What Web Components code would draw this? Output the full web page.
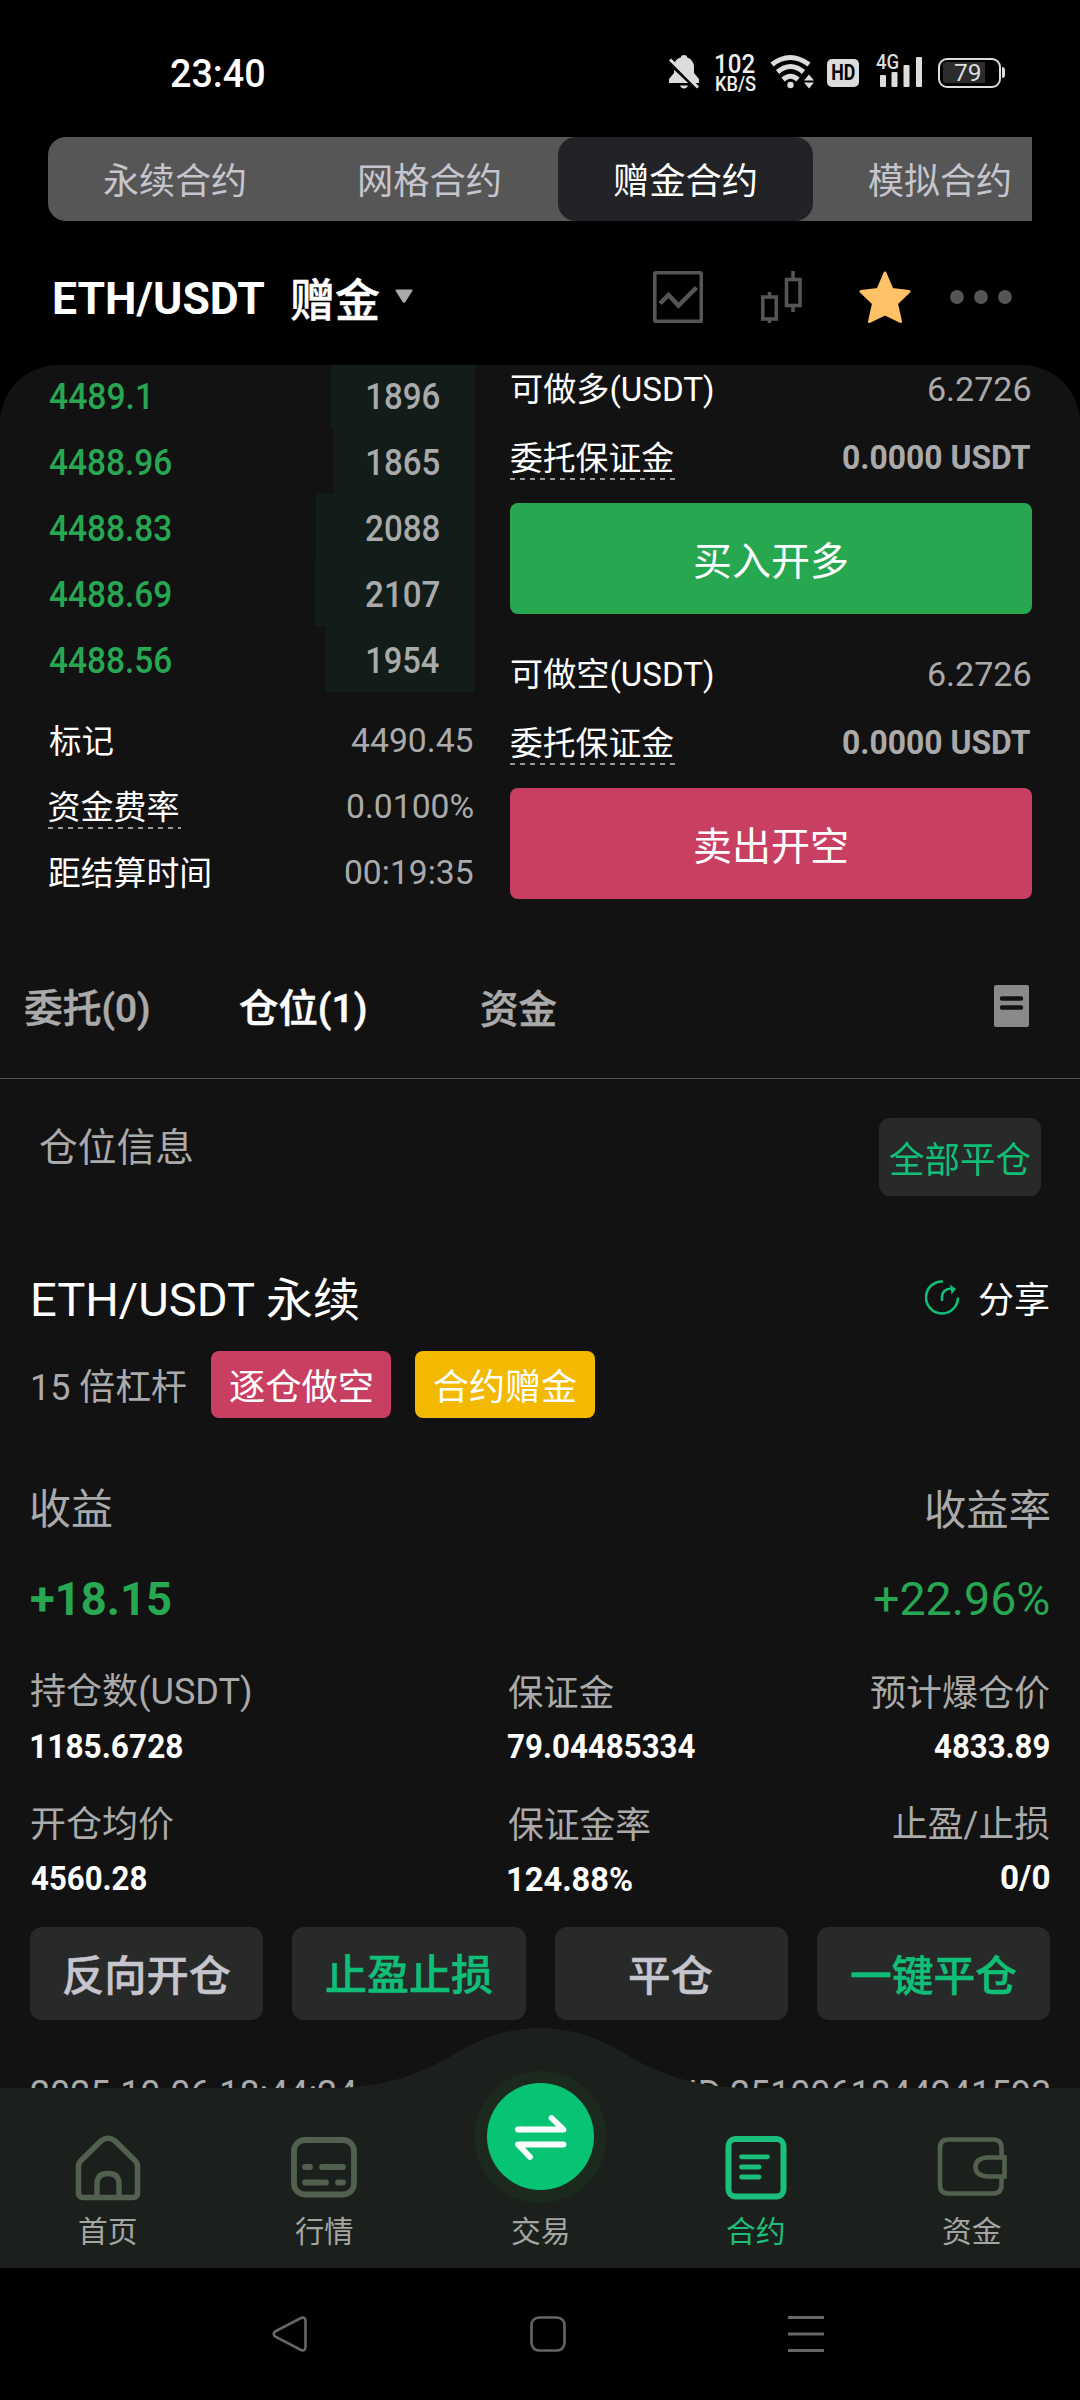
<!DOCTYPE html>
<html lang="zh-CN">
<head>
<meta charset="utf-8">
<title>ETH/USDT 赠金合约</title>
<style>
html,body{margin:0;padding:0;background:#000}
body{width:1080px;height:2400px;overflow:hidden;display:flex;flex-direction:column;color:#fff;
font-family:Roboto,"Noto Sans CJK SC",sans-serif}
</style>
</head>
<body>
<status-bar></status-bar>
<segment-tabs></segment-tabs>
<pair-header></pair-header>
<trade-panel>
  <order-book slot="book"></order-book>
  <trade-form slot="form"></trade-form>
  <view-tabs></view-tabs>
  <position-card></position-card>
</trade-panel>
<bottom-nav></bottom-nav>
<system-nav></system-nav>
<script>
/* Text whose box is exactly its ink: w = ink width, s = size, wt = weight, c = colour */
class InkText extends HTMLElement{
  connectedCallback(){
    if(this.shadowRoot) return;
    const r=this.attachShadow({mode:'open'});
    const s=+this.getAttribute('s'),wt=this.getAttribute('wt')||'400',w=+this.getAttribute('w');
    const c=this.getAttribute('c');
    const L=Math.ceil(s);
    const ctx=InkText.ctx;
    ctx.font=`${wt} ${s}px Roboto, "Noto Sans CJK SC", sans-serif`;
    const m=ctx.measureText(this.textContent);
    const ink=m.actualBoundingBoxRight+m.actualBoundingBoxLeft;
    const k=w?w/ink:1;
    const base=(L+Math.round(m.fontBoundingBoxAscent)-Math.round(m.fontBoundingBoxDescent))/2;
    const dy=-Math.round(base-m.actualBoundingBoxAscent);
    const h=Math.round(m.actualBoundingBoxAscent+m.actualBoundingBoxDescent);
    /* the CJK family has no medium cut, so a thin stroke gives its weight */
    const cjk=wt==='500'&&/[\u4e00-\u9fff]/.test(this.textContent);
    r.innerHTML=`<style>:host{display:block;flex:none;width:${w||ink}px;height:${h}px;${c?`color:${c};`:''}}
      div{width:max-content;white-space:pre;font-size:${s}px;font-weight:${wt};line-height:${L}px;${cjk?'-webkit-text-stroke:.5px currentColor;':''}
      transform-origin:0 0;transform:translateY(${dy}px) scaleX(${k}) translateX(${m.actualBoundingBoxLeft}px)}</style><div><slot></slot></div>`;
  }
}
InkText.ctx=document.createElement('canvas').getContext('2d');
customElements.define('ink-text',InkText);

const define=(name,css,html)=>{
  const t=document.createElement('template');
  t.innerHTML=`<style>:host{box-sizing:border-box}*{box-sizing:border-box}svg{display:block;flex:none}${css}</style>${html}`;
  customElements.define(name,class extends HTMLElement{
    constructor(){super();this.attachShadow({mode:'open'}).append(document.importNode(t.content,true));}
  });
};

define('dash-label',`
:host{display:block;flex:none}
.b{padding:6px 0;position:relative}
.b::after{content:"";position:absolute;left:-1px;right:-2px;bottom:0;height:2px;background:repeating-linear-gradient(90deg,#999 0 5px,transparent 5px 10px)}
`,`<div class="b"><slot></slot></div>`);

define('status-bar',`
:host{display:flex;height:137px;padding:50px 0 42px 171px;align-items:center}
.net{margin-left:14px;display:flex;flex-direction:column;gap:3px}
.hd{margin-left:13px;width:32px;height:28px;border-radius:5px;background:#dcdcdc;display:flex;align-items:center;justify-content:center}
.sig{margin-left:17px;position:relative}
.sig ink-text{position:absolute;left:0;top:5px}
.bat{margin-left:15px;width:63px;height:30px;border:2.5px solid #dcdcdc;border-radius:9px;display:flex;align-items:center;padding-left:3px}
.fill{width:42px;height:21px;background:#2c2c2c;border-radius:3px 0 0 3px;display:flex;align-items:center;padding-left:11px}
.cap{width:3px;height:11px;margin-left:1px;border-radius:0 3px 3px 0;background:#dcdcdc}
`,`<ink-text w="93" s="38" wt="500">23:40</ink-text>
<svg style="margin-left:405px" width="33" height="45" viewBox="0 0 33 45"><path d="M0 33v-4l5-6V16C5 11 9 8 12 7.5V7q0-2 3-2t3 2v.5c4 1 7 5 7 9V23l5 6v4zM11 35.500h8q-1 3-4 3t-4-3z" fill="#dcdcdc"/><path d="M-1 11 31 41" stroke="#000" stroke-width="4.500"/><path d="M1 9.500 29 37.500" stroke="#dcdcdc" stroke-width="3"/></svg>
<div class="net"><ink-text w="39" s="25" wt="500" c="#eee">102</ink-text><ink-text w="40" s="20" wt="500" c="#eee">KB/S</ink-text></div>
<svg style="margin-left:14px" width="44" height="45" viewBox="0 0 44 45"><g fill="none" stroke="#dcdcdc" stroke-width="5"><path d="M2 14.500q18-14 37 0"/><path d="M7.500 22q13-11 26 0"/><path d="M13 29.500q7.500-6.500 15 0"/></g><circle cx="20.500" cy="35" r="3.200" fill="#dcdcdc"/><path d="M39 23l6.500 8h-13z" stroke="#000" stroke-width="2.500"/><path d="M39 24.500l5 6H34zM39 38.500l5-6H34z" fill="#dcdcdc"/></svg>
<div class="hd"><ink-text w="23" s="22" wt="700" c="#000">HD</ink-text></div>
<div class="sig"><svg width="47" height="45" viewBox="0 0 47 45" fill="#dcdcdc"><rect x="4" y="25" width="6" height="12" rx="1"/><rect x="15.500" y="22" width="6" height="15" rx="1"/><rect x="27.500" y="15" width="6" height="22" rx="1"/><rect x="40" y="7" width="6" height="30" rx="1"/></svg><ink-text w="22" s="21" wt="500" c="#dcdcdc">4G</ink-text></div>
<div class="bat"><div class="fill"><ink-text w="26" s="24" wt="400" c="#dcdcdc">79</ink-text></div></div><div class="cap"></div>`);

define('segment-tabs',`
:host{display:flex;flex:none;height:84px;margin-left:48px;width:984px;border-radius:18px 0 0 18px;background:#565656;overflow:hidden}
div{flex:none;width:255px;height:84px;display:flex;align-items:center;justify-content:center;color:#c6c5cd;padding-top:2px;padding-right:2px}
.on{background:#222326;color:#fff;border-radius:18px}
`,`<div><ink-text w="141" s="36">永续合约</ink-text></div><div><ink-text w="140" s="36">网格合约</ink-text></div><div class="on"><ink-text w="142" s="36">赠金合约</ink-text></div><div><ink-text w="141" s="36">模拟合约</ink-text></div>`);

define('pair-header',`
:host{display:flex;flex:none;height:144px;padding:10px 0 0 54px;align-items:center}
svg{margin-bottom:2px}
`,`<ink-text style="margin-top:3px" w="210" s="45" wt="700">ETH/USDT</ink-text><ink-text style="margin-left:27px;margin-top:2px" w="88" s="45" wt="500">赠金</ink-text>
<svg style="margin-left:15px" width="20" height="16" viewBox="0 0 20 16"><path d="M2.500 1.500h15L10.500 12.500q-.5.500-1 0z" fill="#aaa" stroke="#aaa" stroke-width="2" stroke-linejoin="round"/></svg>
<svg style="margin-left:239px" width="50" height="52" viewBox="0 0 50 52" fill="none" stroke="#555"><rect x="1.800" y="1.800" width="46.500" height="48.500" rx="1" stroke-width="3.600"/><path d="M7 32.500 15.500 24 25.500 34.500 43.500 16.500" stroke-width="4.500"/></svg>
<svg style="margin-left:58px" width="41" height="52" viewBox="0 0 41 52" fill="none" stroke="#555" stroke-width="3.600"><rect x="1.800" y="26" width="13.500" height="22"/><path d="M8.500 21v5M8.500 48v4M32 0v8M32 35v6"/><rect x="25.500" y="8.500" width="13.500" height="26"/></svg>
<svg style="margin-left:57px" width="52" height="52" viewBox="0 0 52 52"><path d="M26 2 33 18.500 50 20.500 37.500 32.500 41.500 50.500 26 43 10.500 50.500 14.500 32.500 2 20.500 19 18.500z" fill="#ffc266" stroke="#ffc266" stroke-width="3" stroke-linejoin="round"/></svg>
<svg style="margin-left:39px" width="62" height="14" viewBox="0 0 62 14" fill="#555"><circle cx="7" cy="7" r="6.900"/><circle cx="31" cy="7" r="6.900"/><circle cx="55" cy="7" r="6.900"/></svg>`);

define('trade-panel',`
:host{display:block;height:1723px;flex:none;background:#121212;border-radius:58px 58px 0 0;overflow:hidden}
.top{display:flex;height:534px}
.l{width:474px;margin-right:36px}.r{width:522px}
`,`<div class="top"><div class="l"><slot name="book"></slot></div><div class="r"><slot name="form"></slot></div></div><slot></slot>`);

const book=[['4489.1',99,1896,72,143],['4488.96',122,1865,72,140],['4488.83',122,2088,73,158],['4488.69',122,2107,73,159],['4488.56',122,1954,72,148]];
define('order-book',`
:host{display:block;padding-left:48.5px}
.row{display:flex;height:66px;align-items:center;justify-content:space-between}
.row>ink-text,.q ink-text{margin-top:2px}
.row:first-of-type{height:63px}
.row:first-of-type>ink-text,.row:first-of-type .q ink-text{margin-top:-1px}
.q{align-self:stretch;display:flex;align-items:center;justify-content:flex-end;padding-right:35px;background:#121d1a}
.info{display:flex;height:66px;align-items:center;justify-content:space-between;padding-right:1px}
`,book.map(([p,w,q,qw,bw])=>`<div class="row"><ink-text w="${w}" s="36" wt="500" c="#27a752">${p}</ink-text><div class="q" style="width:${bw}px"><ink-text w="${qw}" s="36" wt="500" c="#aaa">${q}</ink-text></div></div>`).join('')+
`<div class="info" style="margin-top:15px"><ink-text w="64" s="33">标记</ink-text><ink-text w="122" s="33" c="#aaa">4490.45</ink-text></div>
<div class="info"><dash-label><ink-text w="130" s="33">资金费率</ink-text></dash-label><ink-text w="126" s="33" c="#aaa">0.0100%</ink-text></div>
<div class="info"><ink-text w="161" s="33">距结算时间</ink-text><ink-text w="128" s="33" c="#aaa">00:19:35</ink-text></div>`);

const side=(lab,btn,col,mt)=>`<div class="row" style="height:50px;margin-top:${mt}px"><ink-text w="202" s="33">${lab}</ink-text><ink-text style="margin-bottom:3px" w="101" s="33" c="#aaa">6.2726</ink-text></div>
<div class="row" style="height:84px"><dash-label><ink-text w="163" s="33">委托保证金</ink-text></dash-label><ink-text w="187" s="33" wt="700" c="#aaa">0.0000 USDT</ink-text></div>
<div class="btn" style="background:${col}"><ink-text w="152" s="39">${btn}</ink-text></div>`;
define('trade-form',`
:host{display:block}
.row{display:flex;align-items:center;justify-content:space-between;padding:0 2px 0 1px}
.btn{margin-top:4px;height:111px;border-radius:8px;display:flex;align-items:center;justify-content:center;padding-top:5px}
`,side('可做多(USDT)','买入开多','#27a74f',0)+side('可做空(USDT)','卖出开空','#c93f62',36));

define('view-tabs',`
:host{display:flex;height:180px;padding:44px 51px 1px 25px;align-items:center;border-bottom:1px solid #515151;color:#aaa}
`,`<ink-text w="124" s="39" wt="500">委托(0)</ink-text><ink-text style="margin-left:91px" w="126" s="39" wt="500" c="#fff">仓位(1)</ink-text><ink-text style="margin-left:115px;margin-bottom:2px" w="76" s="39" wt="500">资金</ink-text>
<svg style="margin-left:auto;margin-bottom:8px" width="35" height="42" viewBox="0 0 35 42"><rect width="35" height="42" rx="2" fill="#8a8a8a"/><path d="M8 13.500h19M8 22.500h19" stroke="#121212" stroke-width="4.500" stroke-linecap="round"/></svg>`);

define('position-card',`
:host{display:block}
.f{display:flex;align-items:center;justify-content:space-between}
.sec{padding:39px 39px 0 40px;align-items:flex-start}
.all{width:162px;height:78px;border-radius:11px;background:#282929;display:flex;align-items:center;justify-content:center;padding-top:3px;padding-right:1px}
.p{padding:0 31px}
.v{padding-top:1px}
.tag{height:67px;width:180px;border-radius:8px;display:flex;align-items:center;justify-content:center;padding-top:2px}
.mid{display:flex;width:477px}
.act{padding:0 30px;gap:29px;margin-top:37px}
.act div{flex:1;height:93px;border-radius:12px;background:#282929;display:flex;align-items:center;justify-content:center;padding-top:4px;color:#c6c5cd}
.act .g{color:#0fbf78}
`,`<div class="f sec"><ink-text style="margin-top:10px" w="152" s="39" c="#aaa">仓位信息</ink-text><div class="all"><ink-text w="141" s="36" c="#0fbf78">全部平仓</ink-text></div></div>
<div class="f p" style="height:46px;margin-top:80px"><ink-text style="margin-left:2px" w="327" s="46">ETH/USDT 永续</ink-text><div class="f">
<svg style="margin-bottom:4px" width="35" height="35" viewBox="0 0 35 35" fill="none" stroke="#0fbf78" stroke-width="2.600"><path d="M18 1.500A16 16 0 1 0 33 17.500"/><path d="M17 21V17q0-8 10-8.500"/><path d="M25 4.500l6 4.500-4.500 5.500z" fill="#0fbf78" stroke="none"/></svg><ink-text style="margin-left:19px" w="70" s="36">分享</ink-text></div></div>
<div class="f p" style="height:67px;margin-top:29px;justify-content:flex-start"><ink-text style="margin-left:2px;margin-top:2px" w="153" s="36" c="#aaa">15 倍杠杆</ink-text><div class="tag" style="margin-left:25px;background:#c93f62"><ink-text w="142" s="36">逐仓做空</ink-text></div><div class="tag" style="margin-left:24px;background:#f3b900"><ink-text w="142" s="36">合约赠金</ink-text></div></div>
<div class="f p" style="height:40px;margin-top:71px"><ink-text w="81" s="42" c="#aaa">收益</ink-text><ink-text w="123" s="42" c="#aaa">收益率</ink-text></div>
<div class="f p" style="height:38px;margin-top:50px"><ink-text w="140" s="47" wt="700" c="#27a752">+18.15</ink-text><ink-text w="175" s="47" c="#27a752">+22.96%</ink-text></div>
<div class="f p" style="height:38px;margin-top:56px"><div class="mid"><ink-text w="219" s="36" c="#aaa">持仓数(USDT)</ink-text></div><ink-text w="105" s="36" c="#aaa">保证金</ink-text><ink-text style="margin-left:auto" w="178" s="36" c="#aaa">预计爆仓价</ink-text></div>
<div class="f p v" style="height:26px;margin-top:21px"><div class="mid"><ink-text w="151" s="34" wt="700">1185.6728</ink-text></div><ink-text w="187" s="34" wt="700">79.04485334</ink-text><ink-text style="margin-left:auto" w="115" s="34" wt="700">4833.89</ink-text></div>
<div class="f p" style="height:38px;margin-top:46px"><div class="mid"><ink-text w="142" s="36" c="#aaa">开仓均价</ink-text></div><ink-text style="margin-top:2px" w="142" s="36" c="#aaa">保证金率</ink-text><ink-text style="margin-left:auto" w="156" s="36" c="#aaa">止盈/止损</ink-text></div>
<div class="f p v" style="height:26px;margin-top:22px"><div class="mid"><ink-text w="115" s="34" wt="700">4560.28</ink-text></div><ink-text style="margin-top:2px" w="124" s="34" wt="700">124.88%</ink-text><ink-text style="margin-left:auto" w="48" s="34" wt="700">0/0</ink-text></div>
<div class="f act"><div><ink-text w="166" s="42" wt="500">反向开仓</ink-text></div><div class="g"><ink-text w="166" s="42" wt="500">止盈止损</ink-text></div><div><ink-text w="82" s="42" wt="500">平仓</ink-text></div><div class="g"><ink-text w="165" s="42" wt="500">一键平仓</ink-text></div></div>
<div class="f p" style="margin-top:60px;align-items:flex-start;color:#aaa"><ink-text w="326" s="36">2025-10-06 18:44:24</ink-text><ink-text w="358" s="36">ID 2510061844241593</ink-text></div>`);

define('bottom-nav',`
:host{display:block;position:relative;height:180px;flex:none;background:#1c201c}
.hump{position:absolute;left:330px;top:-61px}
.fab{position:absolute;left:474px;top:-17px}
.row{position:relative;display:flex}
.it{width:216px;height:180px;display:flex;flex-direction:column;align-items:center;color:#a4a6a4;padding-right:1px}
.ic{height:128px;padding-top:46px}
.it.on{color:#1abf7b}
`,`<svg class="hump" width="420" height="62" viewBox="0 0 420 62"><path d="M0 62V61C60 61 95 44 125 27C152 10 180 1 210 1S268 10 295 27C325 44 360 61 420 61V62z" fill="#1c201c"/></svg>
<svg class="fab" width="133" height="133" viewBox="0 0 133 133"><circle cx="66.500" cy="66" r="66" fill="#1c2a1e"/><circle cx="66.500" cy="65.500" r="53.500" fill="#06c474"/><path d="M44 58.500h45.500L77.500 47M89.500 73.500H44L56 86" fill="none" stroke="#fff" stroke-width="5.800" stroke-linecap="round" stroke-linejoin="round"/></svg>
<div class="row">
<div class="it"><div class="ic"><svg width="66" height="68" viewBox="0 0 66 68" fill="none" stroke="#52604f" stroke-width="5.500" stroke-linejoin="round"><path d="M3.500 32.500Q3.500 29 6 26.500L26 7Q33 1.500 40 7L60 26.500Q62.500 29 62.500 32.500V59Q62.500 63.500 58 63.500H8Q3.500 63.500 3.500 59z"/><path d="M22 63V50Q22 39.500 33 39.500T44 50V63"/></svg></div><ink-text w="57" s="29.5">首页</ink-text></div>
<div class="it"><div class="ic"><svg width="66" height="68" viewBox="0 0 66 68" fill="none" stroke="#52604f" stroke-width="5.800"><rect x="3" y="6" width="60" height="54.500" rx="11"/><path d="M14 33h5M31 33h21M14 48.500h21M47 48.500h5" stroke-linecap="round"/></svg></div><ink-text w="58" s="29.5">行情</ink-text></div>
<div class="it"><div class="ic"></div><ink-text w="56" s="29.5">交易</ink-text></div>
<div class="it on"><div class="ic"><svg width="62" height="68" viewBox="0 0 62 68" fill="none" stroke="#1abf7b" stroke-width="6"><rect x="3.500" y="5" width="55" height="57.500" rx="7"/><path d="M16.500 22.800h26M16.500 33h17.500M16.500 43h17.500" stroke-width="4.800" stroke-linecap="round"/></svg></div><ink-text w="57" s="29.5">合约</ink-text></div>
<div class="it"><div class="ic"><svg width="70" height="68" viewBox="0 0 70 68" fill="none" stroke="#52604f" stroke-width="4.600"><path d="M64.500 23V14Q64.500 5.500 56 5.500H11.500Q3 5.500 3 14V51Q3 59.500 11.500 59.500H56Q64.500 59.500 64.500 51V43"/><path d="M67.500 23.500H50Q38.500 24.500 38.500 33T50 42.500H67.500z"/></svg></div><ink-text w="58" s="29.5">资金</ink-text></div>
</div>`);

define('system-nav',`
:host{display:flex;height:132px;flex:none;align-items:center;padding-left:272px}
`,`<svg width="36" height="36" viewBox="0 0 36 36" fill="none" stroke="#666" stroke-width="2.600"><path d="M3 15.500 29 2Q33.500.500 33.500 5V31Q33.500 35.500 29 34L3 20.500Q.500 18 3 15.500z"/></svg>
<svg style="margin-left:222px" width="36" height="36" viewBox="0 0 36 36" fill="none" stroke="#666" stroke-width="2.600"><rect x="1.500" y="1.500" width="33" height="33" rx="7.500"/></svg>
<svg style="margin-left:222px" width="36" height="36" viewBox="0 0 36 36" stroke="#666" stroke-width="2.800"><path d="M0 1.500h36M0 18h36M0 34.500h36"/></svg>`);
</script>
</body>
</html>
